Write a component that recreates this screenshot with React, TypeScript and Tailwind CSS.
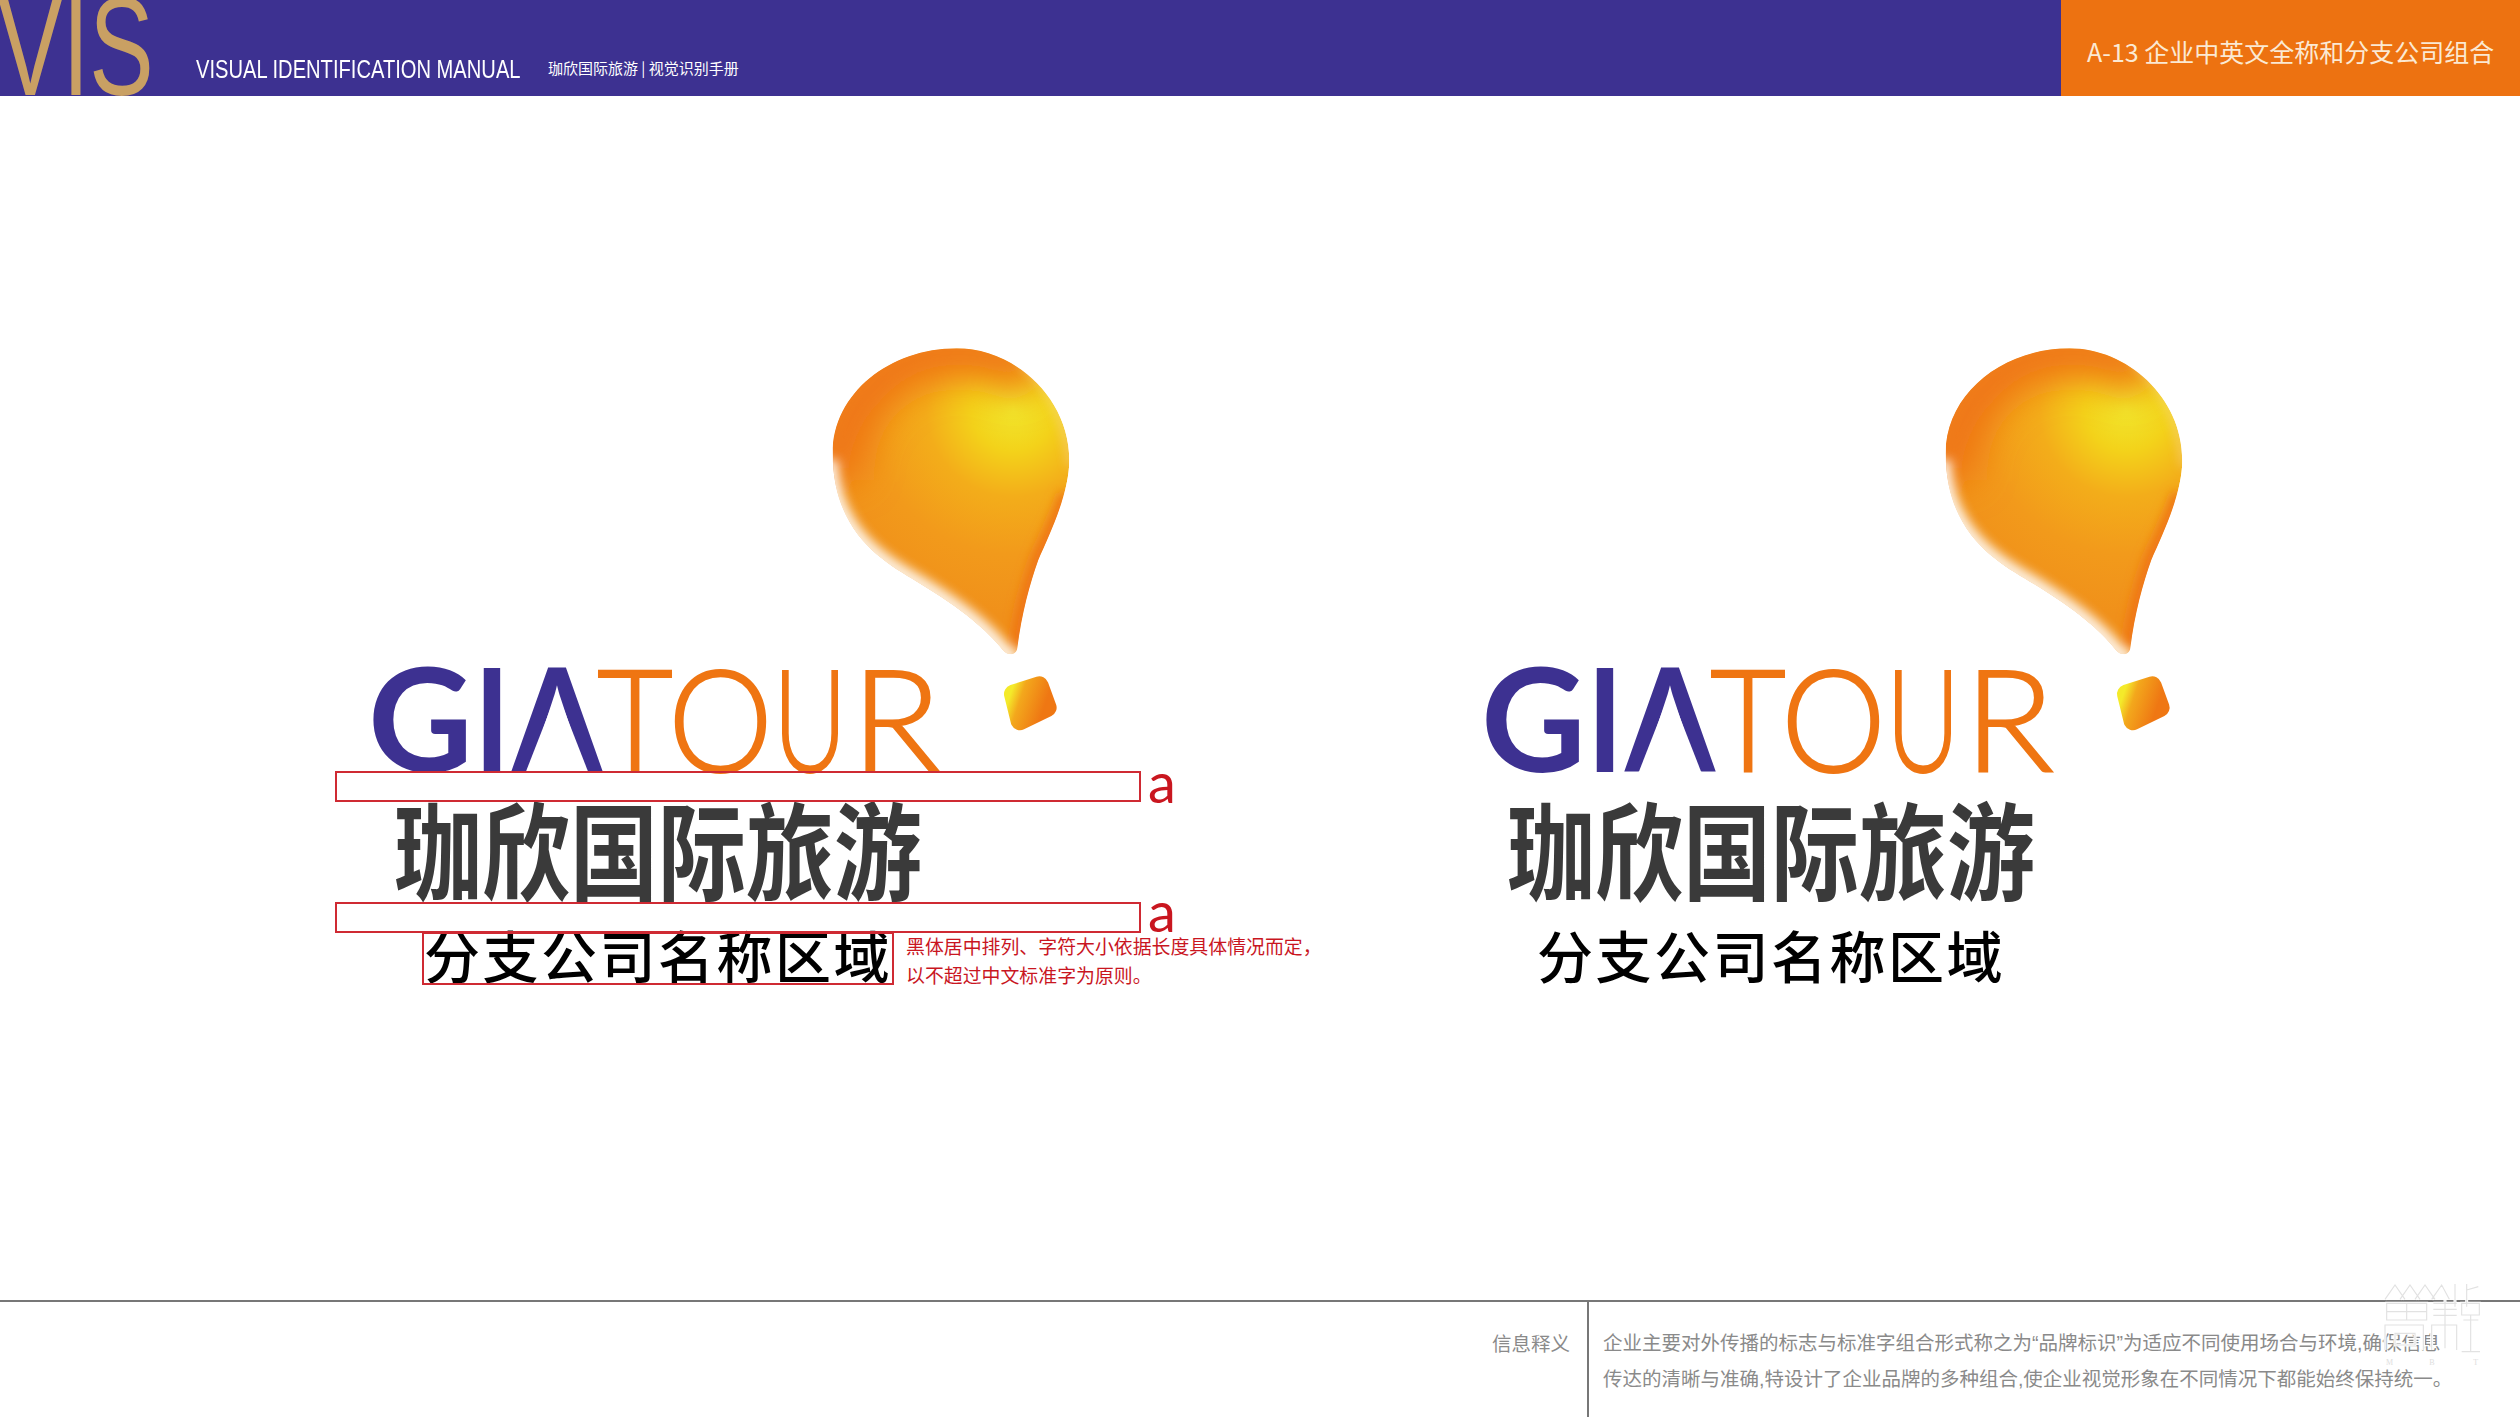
import React from 'react';

const CJK = '"Noto Sans CJK SC", "Noto Sans", sans-serif';
const MIXED = '"Liberation Sans", "Noto Sans CJK SC", sans-serif';

// letters of the wordmark: x / advance width are page-level numbers read off the sheet
const LETTERS = [
  { ch: 'G', x: 368, w: 105, color: '#3d3191', weight: 700, stroke: 0 },
  { ch: 'I', x: 474, w: 36, color: '#3d3191', weight: 700, stroke: 0 },
  { ch: 'A', x: 512, w: 90, color: '#3d3191', weight: 700, stroke: 0 },
  { ch: 'T', x: 597, w: 76, color: '#ef7512', weight: 300, stroke: 2 },
  { ch: 'O', x: 668, w: 105, color: '#ef7512', weight: 300, stroke: 2 },
  { ch: 'U', x: 773, w: 74, color: '#ef7512', weight: 300, stroke: 2 },
  { ch: 'R', x: 851, w: 90, color: '#ef7512', weight: 300, stroke: 2 },
];

function Balloon({ id }: { id: string }) {
  const shape =
    'M470 85 C640 85 808 230 808 420 C808 520 750 640 715 720 C690 790 665 880 652 985 C648 1008 622 1008 608 990 C560 930 490 870 350 785 C250 725 98 640 98 400 C98 220 270 85 470 85 Z';
  return (
    <g transform="translate(800 320) scale(0.3333)">
      <defs>
        <radialGradient id={`${id}-body`} gradientUnits="userSpaceOnUse" cx="640" cy="270" r="620">
          <stop offset="0" stopColor="#f1e72c" />
          <stop offset="0.2" stopColor="#f3d21a" />
          <stop offset="0.42" stopColor="#f3ad1a" />
          <stop offset="0.7" stopColor="#f29a1b" />
          <stop offset="1" stopColor="#f0901a" />
        </radialGradient>
        <linearGradient id={`${id}-chip`} x1="0" y1="0" x2="1" y2="0.35">
          <stop offset="0" stopColor="#f4ea2a" />
          <stop offset="0.3" stopColor="#f3a81c" />
          <stop offset="1" stopColor="#ef7713" />
        </linearGradient>
        <clipPath id={`${id}-clip`}>
          <path d={shape} />
        </clipPath>
        <filter id={`${id}-soft`} x="-30%" y="-30%" width="160%" height="160%">
          <feGaussianBlur stdDeviation="16" />
        </filter>
        <filter id={`${id}-wide`} x="-40%" y="-40%" width="180%" height="180%">
          <feGaussianBlur stdDeviation="55" />
        </filter>
      </defs>
      <g clipPath={`url(#${id}-clip)`}>
        <path d={shape} fill={`url(#${id}-body)`} />
        {/* orange rim over the top and left */}
        <path
          d="M110 480 C110 240 280 95 470 95 C560 95 630 115 700 170"
          fill="none"
          stroke="#ef7512"
          strokeWidth="150"
          filter={`url(#${id}-wide)`}
        />
        <path d="M800 520 C770 610 735 670 715 720 C690 790 665 880 652 985" fill="none" stroke="#ef7512" strokeWidth="44" filter={`url(#${id}-soft)`} />
        {/* pale fade along the underside */}
        <path
          d="M90 420 C98 640 250 725 350 785 C490 870 560 930 608 990 L650 1020"
          fill="none"
          stroke="#fff"
          strokeWidth="46"
          opacity="0.9"
          filter={`url(#${id}-soft)`}
        />
        <path d="M660 125 C740 180 800 290 815 440" fill="none" stroke="#fbe3bd" strokeWidth="14" opacity="0.7" filter={`url(#${id}-soft)`} />
      </g>
      <path
        d="M640 1122 L718 1097 L742 1163 L660 1203 Z"
        fill={`url(#${id}-chip)`}
        stroke={`url(#${id}-chip)`}
        strokeWidth="56"
        strokeLinejoin="round"
      />
    </g>
  );
}

function Logo({ id, children }: { id: string; children?: React.ReactNode }) {
  return (
    <div className="relative w-[646px] shrink-0">
      <svg width="760" height="432" viewBox="335 340 760 432" className="block max-w-none overflow-visible">
        <Balloon id={id} />
        {LETTERS.map((l) => (
          <text
            key={l.ch}
            x={l.x}
            y="772"
            textLength={l.w}
            lengthAdjust="spacingAndGlyphs"
            fontFamily="Lato, sans-serif"
            fontSize="143"
            fontWeight={l.weight}
            fill={l.color}
            stroke={l.color}
            strokeWidth={l.stroke}
          >
            {l.ch}
          </text>
        ))}
        {/* the A of the mark has no crossbar */}
        <polygon points="557,692 525,774 589,774" fill="#fff" />
      </svg>
      <div className="flex h-[131px] items-end justify-center pb-[4px]">
        <div
          className="origin-bottom scale-y-[1.2] whitespace-nowrap text-[88px] font-bold leading-[88px] text-[#3a3a3a]"
          style={{ fontFamily: CJK }}
        >
          珈欣国际旅游
        </div>
      </div>
      <div
        className="mt-[26px] whitespace-nowrap text-center text-[56px] font-medium leading-[50px] tracking-[2.5px] text-black"
        style={{ fontFamily: CJK }}
      >
        分支公司名称区域
      </div>
      {children}
    </div>
  );
}

function GuideBox({ className }: { className: string }) {
  return <div className={`absolute border-2 border-[#cf2a33] ${className}`} />;
}

function Guides() {
  return (
    <>
      <GuideBox className="left-0 top-[431px] h-[31px] w-[806px]" />
      <GuideBox className="left-0 top-[562px] h-[31px] w-[806px]" />
      <GuideBox className="left-[87px] top-[592px] h-[53px] w-[472px]" />
      <div className="absolute left-[813px] top-[414px] text-[56px] font-normal leading-[56px] text-[#c9161f]" style={{ fontFamily: 'Lato, sans-serif' }}>
        a
      </div>
      <div className="absolute left-[813px] top-[543px] text-[56px] font-normal leading-[56px] text-[#c9161f]" style={{ fontFamily: 'Lato, sans-serif' }}>
        a
      </div>
      <div
        className="absolute left-[571px] top-[591px] w-[440px] whitespace-nowrap text-[18.9px] leading-[29px] text-[#c9161f]"
        style={{ fontFamily: CJK }}
      >
        黑体居中排列、字符大小依据长度具体情况而定，
        <br />
        以不超过中文标准字为原则。
      </div>
    </>
  );
}

const WATERMARK =
  'M75 88 L105 45 L135 88 M120 88 L150 45 L180 88 M165 88 L195 45 L225 88 M215 88 L245 45 L268 88 M285 42 V110 M320 42 V110 M320 60 L355 50 ' +
  'M80 100 H200 V150 H80 Z M80 125 H200 M140 100 V150 M220 100 H290 M220 118 H290 M220 136 H290 M255 90 V170 M305 100 H358 V135 H305 Z ' +
  'M75 240 V165 H190 V240 M105 190 H165 V225 H105 Z M215 240 V165 H290 V240 M255 165 V235 M310 150 H355 M332 135 V245 M305 245 H360';

function Watermark() {
  return (
    <svg width="140" height="110" viewBox="0 0 420 330" className="absolute right-[20px] top-[-32px]" fill="none">
      <path d={WATERMARK} stroke="#fff" strokeWidth="9" />
      <path d={WATERMARK} stroke="#e2e2e2" strokeWidth="3.5" />
      <text x="78" y="285" fontSize="24" fontFamily="Liberation Serif, serif" fill="#dedede">M</text>
      <text x="208" y="285" fontSize="24" fontFamily="Liberation Serif, serif" fill="#dedede">B</text>
      <text x="340" y="285" fontSize="24" fontFamily="Liberation Serif, serif" fill="#dedede">T</text>
    </svg>
  );
}

export default function App() {
  return (
    <div className="flex h-[1417px] w-[2520px] flex-col overflow-hidden bg-white" style={{ fontFamily: CJK }}>
      {/* header bar */}
      <header className="flex h-[96px] shrink-0 items-stretch overflow-hidden bg-[#3d3191]">
        <div className="relative w-[196px] shrink-0">
          <div
            className="absolute left-[-2px] top-[-3px] origin-top-left scale-x-[0.69] whitespace-nowrap text-[140px] leading-[100px] text-[#c9a063]"
            style={{ fontFamily: '"Liberation Sans", sans-serif' }}
          >
            VIS
          </div>
        </div>
        <div className="w-[352px] shrink-0 pt-[54px]">
          <div
            className="origin-left scale-x-[0.76] whitespace-nowrap text-[26.5px] leading-[30px] text-white"
            style={{ fontFamily: '"Liberation Sans", sans-serif' }}
          >
            VISUAL IDENTIFICATION MANUAL
          </div>
        </div>
        <div className="flex-1 whitespace-nowrap pt-[58px] text-[15px] leading-[20px] text-white">珈欣国际旅游 | 视觉识别手册</div>
        <div className="flex w-[459px] shrink-0 items-start whitespace-nowrap bg-[#ed7211] pl-[26px] pt-[33px] text-[25px] leading-[36px] text-[#fbe9d3]">
          A-13 企业中英文全称和分支公司组合
        </div>
      </header>

      {/* the two lockups */}
      <main className="flex flex-1 gap-[467px] pl-[335px] pt-[244px]">
        <Logo id="left">
          <Guides />
        </Logo>
        <Logo id="right" />
      </main>

      {/* info footer */}
      <footer className="relative flex h-[117px] shrink-0 border-t-2 border-[#777777]">
        <div className="w-[1587px] shrink-0 pr-[17px] pt-[26px] text-right text-[19.5px] leading-[30px] text-[#8a8a8a]">信息释义</div>
        <div
          className="flex-1 whitespace-nowrap border-l-2 border-[#777777] pl-[14px] pt-[23px] text-[19.5px] leading-[36px] text-[#8a8a8a]"
          style={{ fontFamily: MIXED }}
        >
          企业主要对外传播的标志与标准字组合形式称之为“品牌标识”为适应不同使用场合与环境,确保信息
          <br />
          传达的清晰与准确,特设计了企业品牌的多种组合,使企业视觉形象在不同情况下都能始终保持统一。
        </div>
        <Watermark />
      </footer>
    </div>
  );
}
